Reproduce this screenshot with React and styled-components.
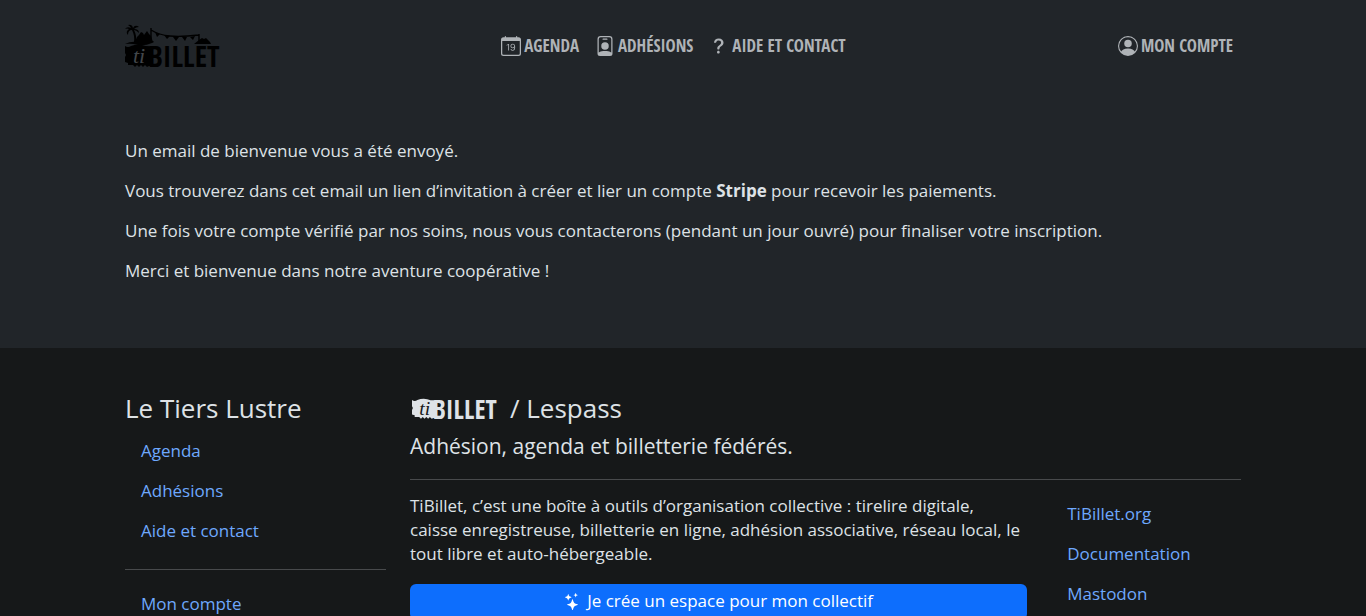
import React from "react";
import styled, { createGlobalStyle } from "styled-components";
import { BsCalendarDate, BsPersonBadge, BsQuestionLg, BsPersonCircle, BsStars } from "react-icons/bs";

const GlobalStyle = createGlobalStyle`
  *, *::before, *::after { box-sizing: border-box; }
  body {
    margin: 0;
    background: #212529;
    color: #dee2e6;
    font-family: "Open Sans", "Noto Sans", sans-serif;
    font-size: 17px;
    line-height: 24px;
  }
`;

const Container = styled.div`
  width: 100%;
  max-width: 1140px;
  margin: 0 auto;
  padding: 0 12px;
`;

const Bar = styled(Container)`
  display: flex;
  align-items: center;
  justify-content: space-between;
  padding-top: 24px;
  padding-bottom: 24px;
`;

const Brand = styled.a`
  display: block;
  color: #000;
  margin-right: 16px;
  svg { display: block; }
`;

const NavList = styled.ul`
  display: flex;
  list-style: none;
  margin: 0;
  padding: 0;
`;

const NavLink = styled.a`
  display: flex;
  align-items: center;
  gap: 3px;
  padding: 8px;
  color: #afb3b7;
  font: bold 17px/24px "Open Sans Condensed", "Roboto Condensed", "Open Sans", sans-serif;
  text-transform: uppercase;
  text-decoration: none;
  white-space: nowrap;
  svg { width: 20px; height: 20px; }
`;

const Main = styled.main`
  padding: 47px 0 49px;
`;

const Paragraph = styled.p`
  margin: 0 0 16px;
`;

const FooterArea = styled.footer`
  background: #161819;
  padding: 48px 0;
`;

const Columns = styled.div`
  display: grid;
  grid-template-columns: minmax(0, 1fr) minmax(0, 3fr);
  margin: 0 -12px;
`;

const InnerColumns = styled(Columns)`
  grid-template-columns: minmax(0, 3fr) minmax(0, 1fr);
`;

const Column = styled.div`
  padding: 0 12px;
`;

const Title = styled.h3`
  display: flex;
  align-items: center;
  gap: 12px;
  margin: 0 0 10px;
  font-size: 26px;
  font-weight: 400;
  line-height: 25px;
`;

const Subtitle = styled.h5`
  margin: 0;
  font-size: 21px;
  font-weight: 400;
  line-height: 30px;
`;

const Rule = styled.hr`
  margin: 18px 0 14px;
  border: 0;
  border-top: 1px solid #484a4c;
`;

const LinkList = styled.ul`
  list-style: none;
  margin: 0;
  padding: 0;
`;

const FooterLink = styled.a`
  display: block;
  padding: 8px 16px;
  color: #6ea8fe;
  text-decoration: none;
`;

const PrimaryButton = styled.button`
  display: flex;
  align-items: center;
  justify-content: center;
  gap: 6px;
  width: 100%;
  margin-top: 18px;
  padding: 5px 12px 7px;
  border: 0;
  border-radius: 6px;
  background: #0d6efd;
  color: #fff;
  font: inherit;
`;

const FooterMark = styled.svg`
  flex: none;
  margin-left: 2px;
`;

const LogoText = styled.text`
  font: bold 29px "Open Sans Condensed", "Roboto Condensed", sans-serif;
  fill: currentColor;
`;

const LogoScript = styled.text`
  font: italic 22px "Liberation Serif", serif;
  fill: ${(p) => p.$ink};
`;

function Wordmark({ ink }) {
  return (
    <g>
      <path
        fill="currentColor"
        d="M0 1 Q3 3 6 1 Q11 -1 17 0 Q22 2 31 1 V3 H26 V21 H24 L22 22 L20 20 L18 22 L16 20 L14 22 L12 20 L10 22 L8 20 H3 V18 L0 17 V12 L1 10 L0 8Z"
      />
      <LogoText x="23" y="22">BILLET</LogoText>
      <LogoScript $ink={ink} x="8" y="18">ti</LogoScript>
    </g>
  );
}

function BrandLogo() {
  return (
    <svg width="96" height="44" viewBox="0 0 96 44" overflow="visible" role="img" aria-label="TiBillet">
      <g fill="currentColor">
        <path d="M0 20 Q6 17 12 18 Q20 17 28 17 Q30 18 27 19 Q20 22 13 21 Q6 19 0 20Z" />
        <path d="M10 18 L12 13 L14 11 L16 8 L18 9 L19 11 L22 7 L24 10 L26 12 L28 18Z" />
        <path d="M9 18 Q10 12 7 6 Q3 6 3 11 Q0 8 4 5 Q2 4 0 5 Q2 2 6 4 Q5 2 3 1 Q7 0 8 4 Q10 0 14 3 Q11 3 9 5 Q14 5 14 9 Q11 6 9 6 Q12 12 11 18Z" />
        <path d="M69 20 L74 16 L77 14 L79 15 L81 14 L85 18 L86 20Z" />
        <path d="M30 8 L32 13 L35 10Z M39 11 L42 15 L45 12Z M48 13 L51 17 L54 13Z M57 13 L60 17 L62 13Z M65 13 L68 16 L70 12Z" />
      </g>
      <path d="M26 4 V17 M26 6 Q34 11 45 12 T74 11 M74 10 V18" fill="none" stroke="currentColor" strokeWidth="1.4" />
      <g transform="translate(0 21)">
        <Wordmark ink="#43474b" />
      </g>
    </svg>
  );
}

const navItems = [
  [BsCalendarDate, "Agenda"],
  [BsPersonBadge, "Adhésions"],
  [BsQuestionLg, "Aide et contact"],
];

function Links({ items }) {
  return (
    <LinkList>
      {items.map((label) => (
        <li key={label}><FooterLink href="#">{label}</FooterLink></li>
      ))}
    </LinkList>
  );
}

export default function App() {
  return (
    <>
      <GlobalStyle />
      <header>
        <Bar as="nav">
          <Brand href="#"><BrandLogo /></Brand>
          <NavList>
            {navItems.map(([Icon, label]) => (
              <li key={label}><NavLink href="#"><Icon />{label}</NavLink></li>
            ))}
          </NavList>
          <NavLink href="#"><BsPersonCircle />Mon compte</NavLink>
        </Bar>
      </header>
      <Main>
        <Container>
          <Paragraph>Un email de bienvenue vous a été envoyé.</Paragraph>
          <Paragraph>Vous trouverez dans cet email un lien d’invitation à créer et lier un compte <strong>Stripe</strong> pour recevoir les paiements.</Paragraph>
          <Paragraph>Une fois votre compte vérifié par nos soins, nous vous contacterons (pendant un jour ouvré) pour finaliser votre inscription.</Paragraph>
          <Paragraph>Merci et bienvenue dans notre aventure coopérative !</Paragraph>
        </Container>
      </Main>
      <FooterArea>
        <Container>
          <Columns>
            <Column>
              <Title>Le Tiers Lustre</Title>
              <Links items={["Agenda", "Adhésions", "Aide et contact"]} />
              <Rule />
              <Links items={["Mon compte"]} />
            </Column>
            <Column>
              <Title>
                <FooterMark width="86" height="20" viewBox="0 0 96 22" overflow="visible" role="img" aria-label="TiBillet"><Wordmark ink="#161819" /></FooterMark>
                / Lespass
              </Title>
              <Subtitle>Adhésion, agenda et billetterie fédérés.</Subtitle>
              <Rule />
              <InnerColumns>
                <Column>
                  <Paragraph>
                    TiBillet, c’est une boîte à outils d’organisation collective : tirelire digitale,<br />
                    caisse enregistreuse, billetterie en ligne, adhésion associative, réseau local, le tout libre et auto-hébergeable.
                  </Paragraph>
                  <PrimaryButton type="button"><BsStars />Je crée un espace pour mon collectif</PrimaryButton>
                </Column>
                <Column>
                  <Links items={["TiBillet.org", "Documentation", "Mastodon"]} />
                </Column>
              </InnerColumns>
            </Column>
          </Columns>
        </Container>
      </FooterArea>
    </>
  );
}
